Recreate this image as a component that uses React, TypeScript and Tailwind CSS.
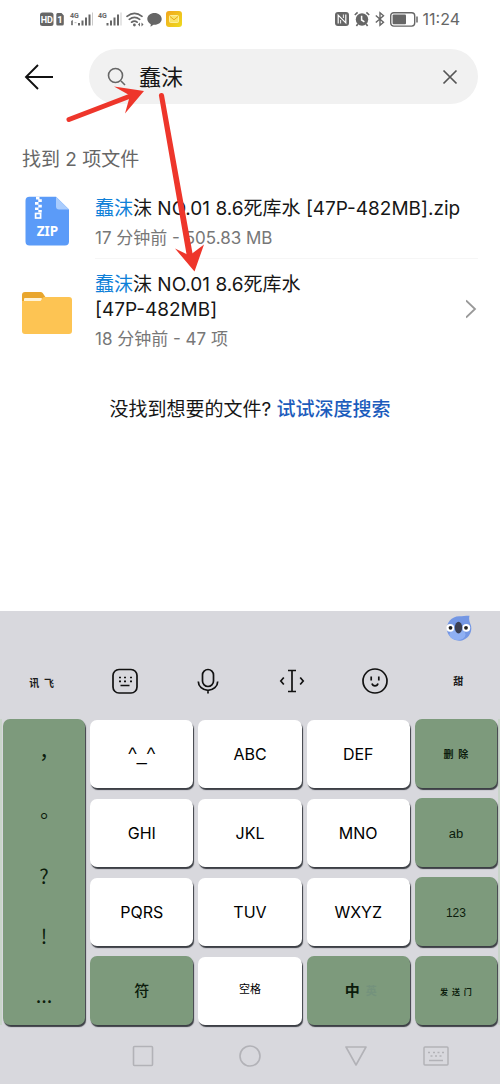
import React from 'react';

const FONT = "font-['Inter','Noto_Sans_CJK_SC',sans-serif]";

function StatusBar() {
  return (
    <div className="flex h-[38px] items-center justify-between px-10 text-[#666]">
      <div className="flex items-center gap-1">
        <svg className="h-[18px] w-[122px]" viewBox="0 0 122 18" fill="#666" aria-hidden="true">
          <rect x="0" y="2.500" width="13.500" height="13.500" rx="2.500" />
          <text x="6.800" y="12.800" fontSize="9" fontWeight="700" fill="#fff" textAnchor="middle" fontFamily="Roboto, sans-serif">HD</text>
          <path d="M18 3h3.500l2.300 2.500V14a1.500 1.500 0 0 1-1.500 1.500H18A1.500 1.500 0 0 1 16.300 14V4.500A1.500 1.500 0 0 1 18 3Z" />
          <text x="20" y="12.600" fontSize="9.500" fontWeight="700" fill="#fff" textAnchor="middle" fontFamily="Roboto, sans-serif">1</text>
          <text x="30" y="8" fontSize="7" fontWeight="700" fontFamily="Roboto, sans-serif">4G</text>
          <path d="M31.500 11l1-.6v4.600h-1z" stroke="#666" strokeWidth=".6" />
          <path d="M34.500 12h2v1.200h-2z" opacity=".4" />
          <rect x="38" y="13" width="2" height="2.500" />
          <rect x="41.500" y="10.500" width="2" height="5" />
          <rect x="45" y="7.500" width="2" height="8" />
          <rect x="48.500" y="4.500" width="2" height="11" />
          <rect x="52" y="2.500" width="1" height="13" opacity=".35" />
          <text x="58" y="8" fontSize="7" fontWeight="700" fontFamily="Roboto, sans-serif">4G</text>
          <rect x="66.500" y="13" width="2" height="2.500" />
          <rect x="70" y="10.500" width="2" height="5" />
          <rect x="73.500" y="7.500" width="2" height="8" />
          <rect x="77" y="4.500" width="2" height="11" />
          <rect x="80.500" y="2.500" width="1" height="13" opacity=".35" />
          <g fill="none" stroke="#666" strokeWidth="1.700" strokeLinecap="round">
            <path d="M87 6.300q7.500-6 15 0M89.300 9.300q5.200-4 10.400 0M91.600 12.200q2.900-2.100 5.500 0" />
          </g>
          <circle cx="94.400" cy="15" r="1.400" />
          <path d="M98 14.500l2-2v4zM103.500 14.500l-2-2v4z" />
          <path d="M114.500 3c4 0 7.200 2.600 7.200 6s-3.200 5.800-7.200 5.800h-1l-3 2 .3-2.600c-2-1-3.500-3-3.500-5.200 0-3.400 3.200-6 7.200-6Z" />
        </svg>
        <svg className="h-4 w-4" viewBox="0 0 16 16" aria-hidden="true">
          <defs>
            <linearGradient id="mail" x1="0" y1="0" x2="1" y2="1">
              <stop offset="0" stopColor="#f2a51d" />
              <stop offset="1" stopColor="#eddb1e" />
            </linearGradient>
          </defs>
          <rect width="16" height="16" rx="3" fill="url(#mail)" />
          <rect x="3.500" y="4.500" width="9" height="7" rx="1" fill="#f9e46a" stroke="#fff5b0" strokeWidth=".8" />
          <path d="M4 5.500 8 8.800l4-3.300" fill="none" stroke="#e8a51a" strokeWidth="1" />
        </svg>
      </div>
      <div className="flex items-center gap-[5px]">
        <svg className="h-[14px] w-[14px]" viewBox="0 0 14 14" aria-hidden="true">
          <rect width="14" height="14" rx="3" fill="#666" />
          <path d="M3.200 11.500V3.200l7.600 7.600V2.500" fill="none" stroke="#fff" strokeWidth="1.200" />
          <path d="M5.600 11.500V8M8.400 6V2.500" stroke="#fff" strokeWidth=".9" />
        </svg>
        <svg className="h-[16px] w-[16px]" viewBox="0 0 16 16" aria-hidden="true">
          <circle cx="8" cy="8.500" r="6.200" fill="#666" />
          <path d="M.8 4 3.600 1.400M15.200 4 12.400 1.400M3.800 13 2.400 15M12.200 13l1.400 2" stroke="#666" strokeWidth="1.600" fill="none" />
          <path d="M7.600 4.800v4.200l2.800 1.800" stroke="#fff" strokeWidth="1.500" fill="none" />
        </svg>
        <svg className="h-4 w-[10px]" viewBox="0 0 10 16" fill="none" stroke="#666" strokeWidth="1.400" aria-hidden="true">
          <path d="M.8 4.500 8.500 11.200 5 14.300V1.700l3.500 3.100L.8 11.500" />
        </svg>
        <svg className="h-[15px] w-[28px]" viewBox="0 0 28 15" aria-hidden="true">
          <rect x=".7" y=".7" width="24" height="13.400" rx="3" fill="none" stroke="#666" strokeWidth="1.400" />
          <rect x="2.600" y="2.600" width="13.400" height="9.600" rx="1" fill="#666" />
          <path d="M27 4.500v6" stroke="#666" strokeWidth="1.500" />
        </svg>
        <time className="text-base leading-5">11:24</time>
      </div>
    </div>
  );
}

function ZipIcon() {
  return (
    <svg className="h-[50px] w-[50px] shrink-0" viewBox="0 0 50 50" aria-hidden="true">
      <path d="M7.500.8H34L47 13.500v32a4 4 0 0 1-4 4H7.500a4 4 0 0 1-4-4V4.800a4 4 0 0 1 4-4Z" fill="#5b9bf8" />
      <path d="M34 .8 47 13.500H37a3 3 0 0 1-3-3Z" fill="#a9ccfd" />
      <path d="M14 .8h3.500v2.700H14zM16.300 3.300h3.500V6h-3.500zM13 6h3.500v2.700H13zM16.300 8.700h3.500v2.700h-3.500zM13 11.400h3.500v2.700H13zM16.300 14.100h3.500v2.400h-3.500z" fill="#fff" />
      <rect x="13.600" y="17.500" width="5" height="4.500" fill="none" stroke="#fff" strokeWidth="1.700" />
      <text x="25.500" y="40" fontSize="13.500" fontWeight="700" fill="#fff" textAnchor="middle" fontFamily="'Noto Sans', sans-serif">ZIP</text>
    </svg>
  );
}

function FolderIcon() {
  return (
    <svg className="h-[50px] w-[50px] shrink-0" viewBox="0 0 50 50" aria-hidden="true">
      <path d="M3 8h15.500a3 3 0 0 1 2.200 1l3 4.500V20H0V11a3 3 0 0 1 3-3Z" fill="#e9a62d" />
      <rect x="2" y="14" width="18" height="5" rx="1" fill="#fff3d6" />
      <path d="M0 17h18.500l2.300-3.200a2 2 0 0 1 1.600-.8H47a3 3 0 0 1 3 3v31a3 3 0 0 1-3 3H3a3 3 0 0 1-3-3Z" fill="#fdc453" />
    </svg>
  );
}

function FileName({ rest, tag }: { rest: string; tag: string }) {
  return (
    <span className="block text-[19px] leading-[25px] text-[#161616]">
      <span className="text-[#0f80d8]">蠢沫</span>
      {rest} <span className="whitespace-nowrap">{tag}</span>
    </span>
  );
}

function ArrowOverlay() {
  return (
    <svg className="pointer-events-none absolute top-[80px] left-[60px] h-[200px] w-[160px]" viewBox="60 80 160 200" fill="#ee362b" aria-hidden="true">
      <path d="M69 119.500 133 95" stroke="#ee362b" strokeWidth="5" strokeLinecap="round" />
      <path d="M144 91 114 86.500 130 95.500 125 113.500Z" />
      <path d="M159 96a2.500 2.500 0 0 1 5-1L193 256l-6 1Z" />
      <path d="M194.500 271.500 175 248.500 189.500 255.500 204 244.500Z" />
    </svg>
  );
}

const KEY = 'flex items-center justify-center rounded-[7px] shadow-[1px_2px_1px_#3c3f45]';
const WHITE = `${KEY} mt-px bg-white text-black`;
const GREEN = `${KEY} bg-[#7d9a7c] pt-[2px] text-[#0c1c0c]`;

function LetterKey({ label }: { label: string }) {
  return <button type="button" className={`${WHITE} text-base`}>{label}</button>;
}

function Keyboard() {
  return (
    <section aria-label="键盘" className="mt-auto bg-[#d8d8dd]">
      <div className="flex h-[47px] justify-end pt-1 pr-7">
        <svg className="h-[27px] w-[27px]" viewBox="0 0 27 27" aria-hidden="true">
          <path d="M14 1.300c4 0 7.500-.8 10.500-.6-.8 3-.2 5 .6 7.500A12.200 12.200 0 1 1 14 1.300Z" fill="#7497e4" />
          <ellipse cx="12.500" cy="19.500" rx="8" ry="5.500" fill="#8fb0f3" />
          <circle cx="5.300" cy="12.800" r="3.900" fill="#fff" />
          <circle cx="21.300" cy="12.800" r="3.900" fill="#fff" />
          <circle cx="5.500" cy="12.800" r="1.900" fill="#222" />
          <circle cx="21" cy="12.800" r="1.900" fill="#222" />
          <ellipse cx="13.500" cy="12.600" rx="3.700" ry="5.800" fill="#3b3f52" />
        </svg>
      </div>
      <div className="grid h-[61px] grid-cols-6 items-center justify-items-center pb-4 text-[10px] font-bold text-[#1c1c1c]">
        <button type="button" className="pt-[6px] whitespace-pre">讯  飞</button>
        <button type="button" aria-label="键盘布局">
          <svg className="h-[26px] w-[26px]" viewBox="0 0 26 26" fill="none" stroke="#111" strokeWidth="1.700">
            <rect x="1" y="1.500" width="24" height="23.500" rx="6" />
            <path d="M7 9.500h2M12 9.500h2M18 9.500h2M7 13.300h2M12 13.300h2M18 13.300h2M8.500 17.500h9" />
          </svg>
        </button>
        <button type="button" aria-label="语音输入">
          <svg className="h-[26px] w-[22px]" viewBox="0 0 22 26" fill="none" stroke="#111" strokeWidth="1.700">
            <rect x="5.500" y="1.500" width="11" height="17" rx="5.500" />
            <path d="M1.300 13.500a9.700 8.800 0 0 0 19.400 0M11 22v3.500" />
          </svg>
        </button>
        <button type="button" aria-label="光标移动">
          <svg className="h-[26px] w-[26px]" viewBox="0 0 26 26" fill="none" stroke="#111" strokeWidth="1.700">
            <path d="M9 2.500h8M9 23.500h8M13 2.500v21M4.800 9.500 1.800 13l3 3.500M21.200 9.500l3 3.500-3 3.500" />
          </svg>
        </button>
        <button type="button" aria-label="表情">
          <svg className="h-[26px] w-[26px]" viewBox="0 0 26 26" fill="none" stroke="#111" strokeWidth="1.700">
            <circle cx="13" cy="13" r="12" />
            <path d="M9.200 8.500v4M16.800 8.500v4M10 15.500q.6 2.300 3 2.300t3-2.300" />
          </svg>
        </button>
        <button type="button" className="pt-[2px]">甜</button>
      </div>

      <div className="grid auto-rows-[69px] grid-cols-[82fr_103fr_103fr_103fr_82fr] gap-x-[5px] gap-y-[10px] border-x-2 border-[#c9d5ca] px-px">
        <div className={`${KEY} row-span-4 flex-col bg-[#7d9a7c] pt-2 font-['Noto_Sans_CJK_TC',sans-serif] text-xl text-[#0c1c0c]`}>
          <button type="button" className="w-full flex-1">，</button>
          <button type="button" className="w-full flex-1">。</button>
          <button type="button" className="w-full flex-1">?</button>
          <button type="button" className="w-full flex-1">!</button>
          <button type="button" className="w-full flex-1">...</button>
        </div>
        <button type="button" className={`${WHITE} font-['Liberation_Sans',sans-serif] text-[18px]`}>^_^</button>
        <LetterKey label="ABC" />
        <LetterKey label="DEF" />
        <button type="button" className={`${GREEN} text-[10px] font-bold whitespace-pre`}>删  除</button>
        <LetterKey label="GHI" />
        <LetterKey label="JKL" />
        <LetterKey label="MNO" />
        <button type="button" className={`${GREEN} font-['Liberation_Sans',sans-serif] text-[13px]`}>ab</button>
        <LetterKey label="PQRS" />
        <LetterKey label="TUV" />
        <LetterKey label="WXYZ" />
        <button type="button" className={`${GREEN} font-['Liberation_Sans',sans-serif] text-[12px]`}>123</button>
        <button type="button" className={`${GREEN} text-[15px] font-medium`}>符</button>
        <button type="button" className={`${WHITE} pb-1 text-[11px]`}>空格</button>
        <button type="button" className={`${GREEN} gap-[6px] pl-[5px] text-[15px] font-bold`}>
          中<span className="text-[11px] text-[#74927c]">英</span>
        </button>
        <button type="button" className={`${GREEN} text-[8px] font-bold whitespace-pre`}>发  送  门</button>
      </div>

      <nav aria-label="系统导航" className="grid h-[59px] grid-cols-[90fr_106fr_107fr_106fr_54fr_37fr] items-center justify-items-center pt-[3px]">
        <button type="button" aria-label="最近任务" className="col-start-2">
          <svg className="h-[22px] w-[22px]" viewBox="0 0 22 22" fill="none" stroke="#b2b2b7" strokeWidth="1.600"><rect x="1.500" y="1.500" width="19" height="19" rx="1" /></svg>
        </button>
        <button type="button" aria-label="主页">
          <svg className="h-[22px] w-[22px]" viewBox="0 0 22 22" fill="none" stroke="#b2b2b7" strokeWidth="1.600"><circle cx="11" cy="11" r="10" /></svg>
        </button>
        <button type="button" aria-label="返回上一级">
          <svg className="h-[22px] w-[22px]" viewBox="0 0 22 22" fill="none" stroke="#b2b2b7" strokeWidth="1.600" strokeLinejoin="round"><path d="M1 2h20L11 20Z" /></svg>
        </button>
        <button type="button" aria-label="切换输入法">
          <svg className="h-[22px] w-[26px]" viewBox="0 0 26 22" fill="none" stroke="#b2b2b7" strokeWidth="1.500">
            <rect x="1" y="2" width="24" height="18" rx="1" />
            <path d="M5 7.500h2M10 7.500h2M14.500 7.500h2M19 7.500h2M7.500 11h2M12 11h2M16.500 11h2M6 15.500h14" />
          </svg>
        </button>
      </nav>
    </section>
  );
}

export default function App() {
  return (
    <div className={`relative flex min-h-screen flex-col bg-white ${FONT}`}>
      <StatusBar />
      <header className="mt-[11px] flex items-center gap-9 pr-[22px] pl-6">
        <button type="button" aria-label="返回">
          <svg className="h-[26px] w-[29px]" viewBox="0 0 29 26" fill="none" stroke="#111" strokeWidth="1.900">
            <path d="M29 13H2.500M14 1 2 13l12 12" />
          </svg>
        </button>
        <div className="flex h-[55px] min-w-0 flex-1 items-center rounded-full bg-[#f1f1f1] pr-5 pl-[18px]">
          <svg className="h-[19px] w-[19px] shrink-0" viewBox="0 0 19 19" fill="none" stroke="#666" strokeWidth="1.600" aria-hidden="true">
            <circle cx="8.500" cy="8.500" r="7" />
            <path d="m14 14 4 4" />
          </svg>
          <input aria-label="搜索文件" defaultValue="蠢沫" className="ml-[13px] min-w-0 flex-1 bg-transparent text-[22px] leading-8 text-[#161616] outline-none" />
          <button type="button" aria-label="清除">
            <svg className="h-4 w-4" viewBox="0 0 16 16" fill="none" stroke="#555" strokeWidth="1.700"><path d="m1.500 1.500 13 13M14.500 1.500l-13 13" /></svg>
          </button>
        </div>
      </header>

      <main className="px-[22px] pb-6">
        <h1 className="mt-[43px] text-[19px] leading-[25px] font-normal text-[#666]">找到 2 项文件</h1>
        <ul className="mt-[11px]">
          <li>
            <a href="#zip" className="flex items-center gap-[23px]">
              <ZipIcon />
              <span className="block min-w-0 flex-1 border-b border-[#f6f6f6] pt-[13px] pb-[7px]">
                <FileName rest="沫 NO.01 8.6死库水" tag="[47P-482MB].zip" />
                <span className="mt-[5px] block text-[17px] leading-[25px] text-[#777]">17 分钟前 - 505.83 MB</span>
              </span>
            </a>
          </li>
          <li>
            <a href="#folder" className="flex items-center gap-[23px]">
              <FolderIcon />
              <span className="block min-w-0 flex-1 pt-[13px] pr-16 pb-[7px]">
                <FileName rest="沫 NO.01 8.6死库水" tag="[47P-482MB]" />
                <span className="mt-[5px] block text-[17px] leading-[25px] text-[#777]">18 分钟前 - 47 项</span>
              </span>
              <svg className="-ml-6 h-5 w-3 shrink-0" viewBox="0 0 12 20" fill="none" stroke="#999" strokeWidth="1.800" aria-hidden="true">
                <path d="m0 1.500 9 8.500-9 8.500" />
              </svg>
            </a>
          </li>
        </ul>
        <p className="mt-[38px] text-center text-[19px] leading-[25px] text-[#161616]">
          没找到想要的文件? <a href="#deep-search" className="font-medium text-[#1c5cbc]">试试深度搜索</a>
        </p>
      </main>

      <Keyboard />
      <ArrowOverlay />
    </div>
  );
}
